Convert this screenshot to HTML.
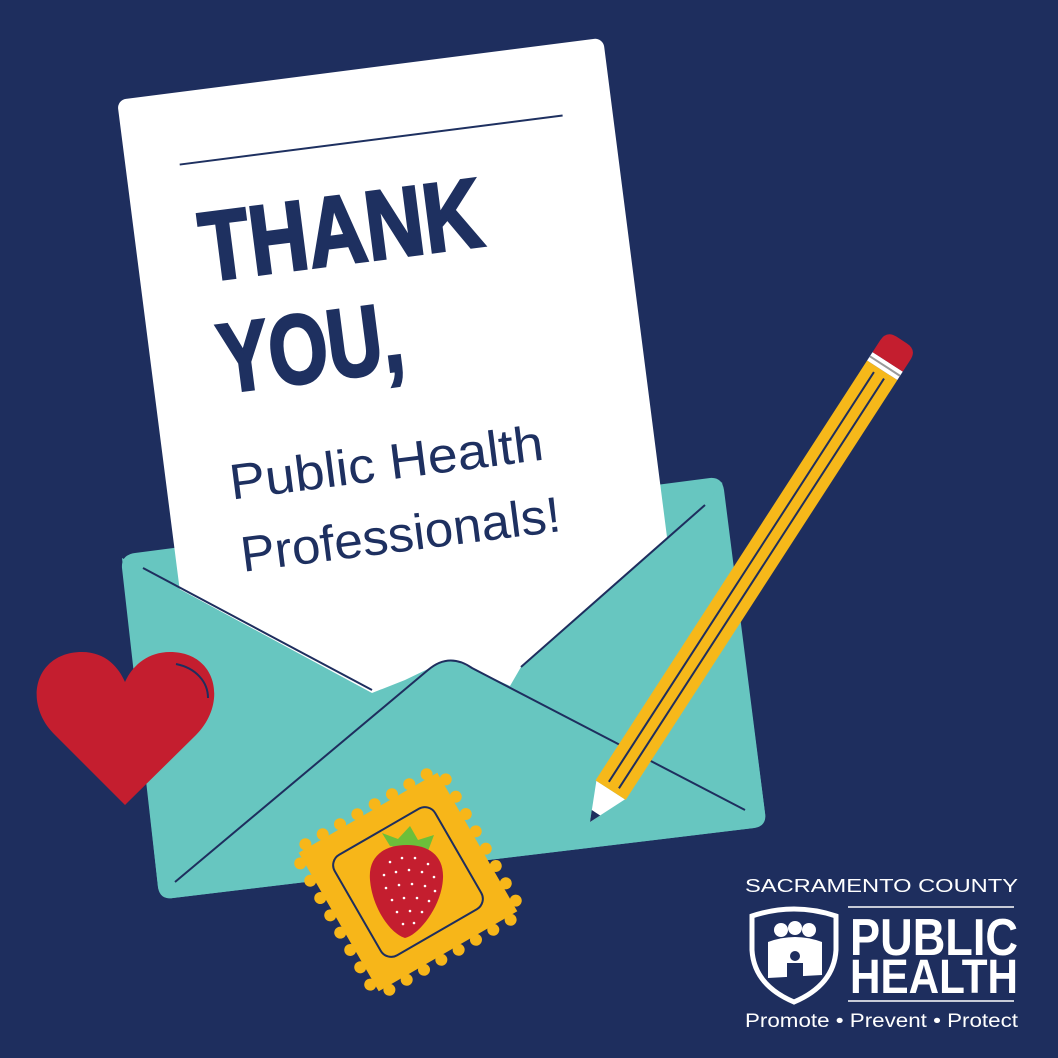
<!DOCTYPE html>
<html><head><meta charset="utf-8"><style>
html,body{margin:0;padding:0;background:#1e2e5e;}
svg{display:block}
</style></head><body>
<svg width="1058" height="1058" viewBox="0 0 1058 1058" xmlns="http://www.w3.org/2000/svg">
<rect width="1058" height="1058" fill="#1e2e5e"/>
<path d="M122,568 Q121,555 135,553 L710,478 Q722,477 724,490 L765,813 Q767,826 754,828 L173,898 Q160,900 158,887 Z" fill="#67c6c0"/>
<g transform="translate(117,100) rotate(-7.3)" font-family="'Liberation Sans',sans-serif" fill="#1e3060">
<rect x="0" y="0" width="490" height="640" rx="9" fill="#fff"/>
<line x1="54" y1="72" x2="440" y2="72" stroke="#1e3060" stroke-width="2"/>
<text x="64" y="191" font-size="98" font-weight="bold" textLength="283" lengthAdjust="spacingAndGlyphs" stroke="#1e3060" stroke-width="3">THANK</text>
<text x="68" y="304" font-size="98" font-weight="bold" textLength="185" lengthAdjust="spacingAndGlyphs" stroke="#1e3060" stroke-width="3">YOU,</text>
<text x="63" y="411" font-size="50" textLength="316" lengthAdjust="spacingAndGlyphs">Public Health</text>
<text x="65" y="484" font-size="50" textLength="322" lengthAdjust="spacingAndGlyphs">Professionals!</text>
</g>
<path d="M122,558 L372,693 L405,680 L430,668 Q449,654 470,668 L510,686 L521,667 L708,502 L722,482 L765,813 Q767,826 754,828 L173,898 Q160,900 158,887 Z" fill="#67c6c0"/>
<g stroke="#1e2e5e" stroke-width="2" fill="none">
<path d="M143,568 L372,690"/>
<path d="M705,505 L521,667"/>
<path d="M175,882 L428,670 Q449,652 472,668 L745,810"/>
</g>
<path d="M125,805 L55,735 C22,703 35,652 82,652 C106,652 119,668 125,682 C131,668 146,652 170,652 C217,652 228,703 196,735 Z" fill="#c41e2f"/>
<path d="M176,664 C196,668 208,682 208,698" stroke="#1e2e5e" stroke-width="2" fill="none"/>
<g transform="translate(590,822) rotate(-57.1)">
<path d="M0,0 L38,-17 L38,17 Z" fill="#fff"/>
<path d="M0,0 L11,-5 L11,5 Z" fill="#1e2e5e"/>
<rect x="38" y="-18" width="500" height="36" fill="#f6b81a"/>
<line x1="44" y1="-6" x2="532" y2="-6" stroke="#1e2e5e" stroke-width="2"/>
<line x1="44" y1="6" x2="532" y2="6" stroke="#1e2e5e" stroke-width="2"/>
<rect x="538" y="-18" width="10" height="36" fill="#fff"/>
<line x1="543" y1="-18" x2="543" y2="18" stroke="#999" stroke-width="2"/>
<path d="M548,-18 L562,-18 Q574,-18 574,-6 L574,6 Q574,18 562,18 L548,18 Z" fill="#c41e2f"/>
</g>
<g transform="translate(408,882) rotate(-30)">
<rect x="-80" y="-80" width="160" height="160" fill="#f7b619"/>
<g fill="#f7b619">
<circle cx="-70" cy="-84" r="6"/><circle cx="-50" cy="-84" r="6"/><circle cx="-30" cy="-84" r="6"/><circle cx="-10" cy="-84" r="6"/><circle cx="10" cy="-84" r="6"/><circle cx="30" cy="-84" r="6"/><circle cx="50" cy="-84" r="6"/><circle cx="70" cy="-84" r="6"/>
<circle cx="-70" cy="84" r="6"/><circle cx="-50" cy="84" r="6"/><circle cx="-30" cy="84" r="6"/><circle cx="-10" cy="84" r="6"/><circle cx="10" cy="84" r="6"/><circle cx="30" cy="84" r="6"/><circle cx="50" cy="84" r="6"/><circle cx="70" cy="84" r="6"/>
<circle cy="-70" cx="-84" r="6"/><circle cy="-50" cx="-84" r="6"/><circle cy="-30" cx="-84" r="6"/><circle cy="-10" cx="-84" r="6"/><circle cy="10" cx="-84" r="6"/><circle cy="30" cx="-84" r="6"/><circle cy="50" cx="-84" r="6"/><circle cy="70" cx="-84" r="6"/>
<circle cy="-70" cx="84" r="6"/><circle cy="-50" cx="84" r="6"/><circle cy="-30" cx="84" r="6"/><circle cy="-10" cx="84" r="6"/><circle cy="10" cx="84" r="6"/><circle cy="30" cx="84" r="6"/><circle cy="50" cx="84" r="6"/><circle cy="70" cx="84" r="6"/>
</g>
<rect x="-58" y="-58" width="116" height="116" rx="12" fill="none" stroke="#1e2e5e" stroke-width="2"/>
</g>
<path d="M390,846 L382,833 L398,839 L410,826 L418,840 L434,835 L428,851 Z" fill="#6cbf3a"/>
<path d="M407,845 C383,845 368,857 370,880 C372,906 389,933 405,938 C419,935 442,906 443,878 C444,856 429,845 407,845 Z" fill="#c41e2f"/>
<g fill="#fff">
<circle cx="390" cy="862" r="1.3"/><circle cx="402" cy="858" r="1.3"/><circle cx="415" cy="858" r="1.3"/><circle cx="428" cy="864" r="1.3"/>
<circle cx="384" cy="875" r="1.3"/><circle cx="396" cy="872" r="1.3"/><circle cx="409" cy="870" r="1.3"/><circle cx="422" cy="872" r="1.3"/><circle cx="434" cy="877" r="1.3"/>
<circle cx="386" cy="888" r="1.3"/><circle cx="399" cy="885" r="1.3"/><circle cx="412" cy="884" r="1.3"/><circle cx="425" cy="886" r="1.3"/><circle cx="435" cy="891" r="1.3"/>
<circle cx="392" cy="900" r="1.3"/><circle cx="404" cy="898" r="1.3"/><circle cx="417" cy="898" r="1.3"/><circle cx="429" cy="901" r="1.3"/>
<circle cx="397" cy="912" r="1.3"/><circle cx="410" cy="911" r="1.3"/><circle cx="422" cy="912" r="1.3"/>
<circle cx="403" cy="924" r="1.3"/><circle cx="414" cy="923" r="1.3"/>
</g>
<g font-family="'Liberation Sans',sans-serif" fill="#fff">
<text x="745" y="892" font-size="18" textLength="273" lengthAdjust="spacingAndGlyphs">SACRAMENTO COUNTY</text>
<line x1="848" y1="907" x2="1014" y2="907" stroke="#fff" stroke-width="1.5"/>
<text x="850" y="955" font-size="52" font-weight="bold" textLength="168" lengthAdjust="spacingAndGlyphs">PUBLIC</text>
<text x="850" y="993" font-size="48" font-weight="bold" textLength="168" lengthAdjust="spacingAndGlyphs">HEALTH</text>
<line x1="848" y1="1001" x2="1014" y2="1001" stroke="#fff" stroke-width="1.5"/>
<text x="745" y="1027" font-size="19" textLength="273" lengthAdjust="spacingAndGlyphs">Promote • Prevent • Protect</text>
</g>
<path d="M752,916 Q794,902 836,916 L836,950 Q834,985 794,1002 Q754,985 752,950 Z" fill="none" stroke="#fff" stroke-width="5"/>
<g fill="#fff">
<circle cx="781" cy="930" r="7"/><circle cx="795" cy="928" r="7"/><circle cx="809" cy="930" r="7"/>
<path d="M768,942 Q795,932 822,942 L822,975 L768,978 Z"/>
</g>
<g fill="#1e2e5e">
<circle cx="795" cy="956" r="5"/>
<path d="M787,963 L803,963 L803,980 L799,980 L799,994 L791,994 L791,980 L787,980 Z"/>
</g>
</svg>
</body></html>
